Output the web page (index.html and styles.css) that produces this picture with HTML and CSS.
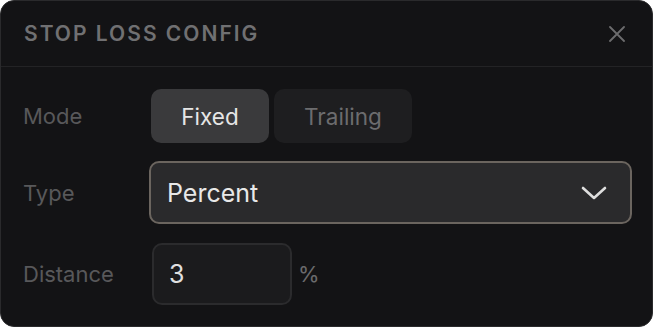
FILE: index.html
```html
<!DOCTYPE html>
<html lang="en">
<head>
    <meta charset="UTF-8">
    <meta name="viewport" content="width=device-width, initial-scale=1.0">
    <title>Stop Loss Config</title>
    <link rel="stylesheet" href="styles.css">
</head>
<body>
    <div class="panel">
        <div class="panel-header">
            <h1 class="panel-title">STOP LOSS CONFIG</h1>
            <button class="close-btn" aria-label="Close">
                <svg width="16" height="16" viewBox="0 0 16 16">
                    <path d="M1 1 L15 15 M15 1 L1 15" stroke="currentColor" stroke-width="1.8" stroke-linecap="round" fill="none"/>
                </svg>
            </button>
        </div>

        <div class="panel-body">
            <div class="row mode-row">
                <span class="label">Mode</span>
                <div class="segmented">
                    <button class="seg-btn active">Fixed</button>
                    <button class="seg-btn">Trailing</button>
                </div>
            </div>

            <div class="row">
                <span class="label">Type</span>
                <div class="select">
                    <span>Percent</span>
                    <svg width="26" height="16" viewBox="0 0 26 16">
                        <path d="M2 3 L13 13 L24 3" stroke="currentColor" stroke-width="2.6" stroke-linecap="round" stroke-linejoin="round" fill="none"/>
                    </svg>
                </div>
            </div>

            <div class="row">
                <span class="label">Distance</span>
                <div class="num-input">3</div>
                <span class="unit">%</span>
            </div>
        </div>
    </div>
</body>
</html>
```

FILE: styles.css
```css
body {
    margin: 0;
    padding: 0;
    background: #ffffff;
    font-family: Inter, "Noto Sans", sans-serif;
}

.panel {
    width: 653px;
    height: 327px;
    box-sizing: border-box;
    background: #131315;
    border: 1px solid #2a2a2c;
    border-radius: 14px;
    overflow: hidden;
}

.panel-header {
    height: 66px;
    box-sizing: border-box;
    display: flex;
    align-items: center;
    justify-content: space-between;
    padding: 0 24px 0 23px;
    border-bottom: 1px solid #232325;
}

.panel-title {
    margin: 0;
    font-size: 21px;
    font-weight: 600;
    letter-spacing: 2px;
    color: #707072;
}

.close-btn {
    background: none;
    border: none;
    padding: 0;
    color: #6c6c6e;
    display: flex;
    margin-right: 3px;
}

.panel-body {
    padding: 22px 20px 0 22px;
    display: flex;
    flex-direction: column;
    gap: 19px;
}

.row {
    display: flex;
    align-items: center;
}

.mode-row {
    margin-bottom: -1px;
}

.label {
    width: 126px;
    flex-shrink: 0;
    font-size: 22px;
    color: #58585a;
}

.segmented {
    display: flex;
    gap: 5px;
    margin-left: 2px;
}

.seg-btn {
    height: 54px;
    border: none;
    border-radius: 10px;
    font-family: inherit;
    font-size: 22.5px;
    padding: 0;
    background: #1e1e20;
    color: #6c6c6e;
    width: 138px;
}

.seg-btn.active {
    width: 118px;
    background: #3a3a3c;
    color: #e6e6e6;
}

.select {
    flex: 1;
    height: 63px;
    box-sizing: border-box;
    display: flex;
    align-items: center;
    justify-content: space-between;
    padding: 0 23px 0 16px;
    background: #2a2a2c;
    border: 2px solid #6b655f;
    border-radius: 10px;
    font-size: 25px;
    color: #e8e8e8;
}

.select svg {
    color: #dedede;
}

.num-input {
    width: 140px;
    height: 62px;
    box-sizing: border-box;
    margin-left: 3px;
    display: flex;
    align-items: center;
    padding-left: 15px;
    background: #1b1b1d;
    border: 2px solid #2b2b2d;
    border-radius: 10px;
    font-size: 25px;
    color: #e0e0e0;
}

.unit {
    margin-left: 6px;
    font-size: 22px;
    color: #6a6a6c;
}
```
